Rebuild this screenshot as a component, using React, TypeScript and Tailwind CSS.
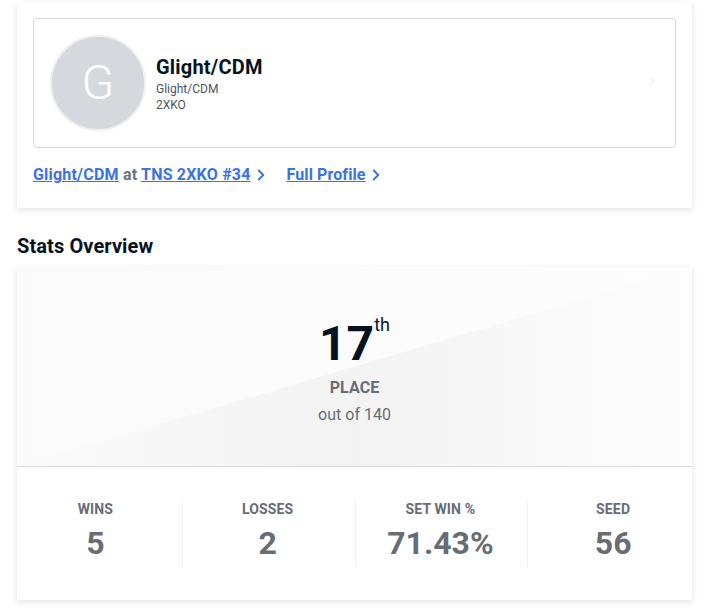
import { ChevronRight } from "lucide-react";

const stats = [
  { label: "WINS", value: "5" },
  { label: "LOSSES", value: "2" },
  { label: "SET WIN %", value: "71.43%" },
  { label: "SEED", value: "56" },
];

export default function App() {
  return (
    <div className="h-[612px] overflow-hidden bg-white pr-[12px] pl-[17px] pt-[2px] font-['Roboto',sans-serif] text-[#06121f]">
      {/* Player card */}
      <section className="h-[206px] bg-white px-4 pt-4 shadow-[0_2px_6px_rgba(0,0,0,0.12)]">
        <div className="flex h-[130px] items-center rounded-[4px] border border-[#d7d8dd] pl-4 pr-[15px]">
          <div className="flex h-[96px] w-[96px] shrink-0 items-center justify-center rounded-full border-2 border-[#eeeff1] bg-[#d5d8dc] text-[48px] font-[350] text-white">
            G
          </div>
          <div className="ml-[10px] flex-1 pt-[1px]">
            <div className="text-[20px] leading-[24px] font-bold tracking-[0.2px]">Glight/CDM</div>
            <div className="mt-[2px] text-[12px] leading-4 text-[#4b5563]">Glight/CDM</div>
            <div className="text-[12px] leading-4 text-[#4b5563]">2XKO</div>
          </div>
          <ChevronRight className="mb-[4px] h-4 w-4 text-[#f0f0f0]" />
        </div>
        <div className="mt-[16px] flex items-center pt-[1px] text-[16px] leading-[20px] font-bold tracking-[0.2px]">
          <span className="text-[#6b7280]">
            <span className="text-[#3b72e4] underline">Glight/CDM</span> at{" "}
            <span className="text-[#3b72e4] underline">TNS 2XKO #34</span>
          </span>
          <ChevronRight className="ml-[1px] h-[18px] w-[18px] text-[#3b72e4]" strokeWidth={2.5} />
          <span className="ml-[17px] tracking-[0.1px] text-[#3b72e4] underline">Full Profile</span>
          <ChevronRight className="ml-[1px] h-[18px] w-[18px] text-[#3b72e4]" strokeWidth={2.5} />
        </div>
      </section>

      <h2 className="mt-[26px] text-[20px] leading-6 font-bold tracking-[0.1px]">Stats Overview</h2>

      {/* Stats card */}
      <section className="mt-[9px] h-[333px] bg-white shadow-[0_2px_6px_rgba(0,0,0,0.12)]">
        <div className="relative h-[200px] border-b border-[#d7d8dd] bg-[linear-gradient(90deg,#fafafa,#fdfdfd)]">
          <div className="absolute inset-0 bg-[linear-gradient(90deg,#fafafa_0%,#f3f3f3_50%,#fdfdfd_100%)] [clip-path:polygon(0_100%,100%_0,100%_100%)]" />
          <div className="relative flex flex-col items-center pt-[47px]">
            <div className="flex items-start">
              <span className="text-[48px] leading-[60px] font-bold">17</span>
              <span className="mt-[1px] text-[18px] leading-5">th</span>
            </div>
            <div className="mt-[2px] text-[16px] leading-6 font-bold tracking-[0.1px] text-[#676d75]">PLACE</div>
            <div className="mt-[3px] text-[16px] leading-6 text-[#676d75]">out of 140</div>
          </div>
        </div>
        <div className="-mx-2 mt-[32px] grid grid-cols-4 text-[#676d75]">
          {stats.map((s, i) => (
            <div
              key={s.label}
              className={`flex h-[68px] flex-col items-center ${i > 0 ? "border-l border-[#f1f1f3] pr-[2px]" : ""}`}
            >
              <div className="text-[14px] leading-[20px] font-bold tracking-[0.15px]">{s.label}</div>
              <div className="mt-[4px] text-[32px] leading-[40px] font-bold">{s.value}</div>
            </div>
          ))}
        </div>
      </section>
    </div>
  );
}
